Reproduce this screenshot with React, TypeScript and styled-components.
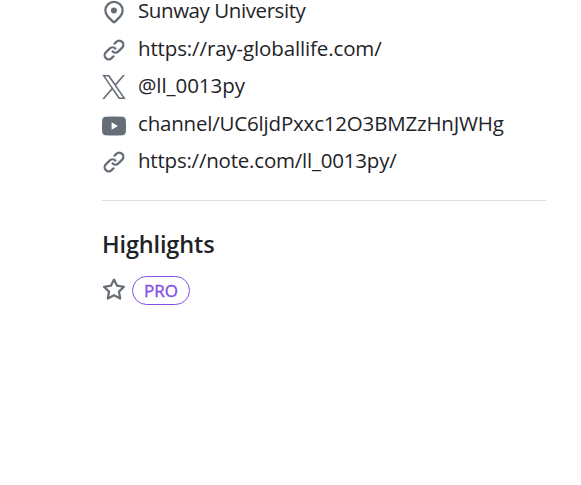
import React from "react";
import styled, { createGlobalStyle } from "styled-components";

const GlobalStyle = createGlobalStyle`
  body {
    margin: 0;
    background: #fff;
    color: #1f2328;
    font-family: "Segoe UI", "Open Sans", "Noto Sans", sans-serif;
    overflow: hidden;
  }
`;

const Sidebar = styled.aside`
  box-sizing: border-box;
  width: 546px;
  height: 485px;
  padding-left: 102px;
`;

const Details = styled.ul`
  list-style: none;
  margin: -8px 0 0;
  padding: 0;
`;

const Detail = styled.li<{ $tracking: number }>`
  display: flex;
  align-items: center;
  gap: 12px;
  height: 37.5px;
  font-size: 20.5px;
  line-height: 21.5px;
  letter-spacing: ${(p) => p.$tracking}px;
  white-space: nowrap;
`;

const Icon = styled.svg`
  flex: none;
  width: 24px;
  height: 24px;
  margin-top: 3px;
  fill: #656d76;
`;

const Highlights = styled.section`
  margin-top: 20px;
  border-top: 1px solid #d8dee4;
  padding-top: 25px;
`;

const Heading = styled.h2`
  margin: 0;
  font-size: 23.5px;
  font-weight: 600;
  line-height: 36px;
  letter-spacing: -0.15px;
`;

const Badges = styled.div`
  display: flex;
  align-items: center;
  gap: 6px;
  margin-top: 14px;
`;

const StarIcon = styled(Icon)`
  margin-top: -1px;
`;

const VideoIcon = styled(Icon)`
  margin-top: 5px;
`;

const Pro = styled.span`
  box-sizing: border-box;
  display: flex;
  align-items: center;
  justify-content: center;
  width: 58px;
  height: 29px;
  border: 1px solid #8250df;
  border-radius: 15px;
  color: #8250df;
  font-size: 17px;
  font-weight: 500;
  line-height: 27px;
  -webkit-text-stroke: 0.35px #8250df;
`;

const LocationIcon = () => (
  <Icon viewBox="0 0 16 16">
    <path d="m12.596 11.596-3.535 3.536a1.5 1.5 0 0 1-2.122 0l-3.535-3.536a6.5 6.5 0 1 1 9.192-9.193 6.5 6.5 0 0 1 0 9.193Zm-1.06-8.132v-.001a5 5 0 1 0-7.072 7.072L8 14.07l3.536-3.534a5 5 0 0 0 0-7.072ZM8 9a2 2 0 1 1-.001-3.999A2 2 0 0 1 8 9Z" />
  </Icon>
);

const LinkIcon = () => (
  <Icon viewBox="0 0 16 16">
    <path d="m7.775 3.275 1.25-1.25a3.5 3.5 0 1 1 4.95 4.95l-2.5 2.5a3.5 3.5 0 0 1-4.95 0 .751.751 0 0 1 .018-1.042.751.751 0 0 1 1.042-.018 1.998 1.998 0 0 0 2.83 0l2.5-2.5a2.002 2.002 0 0 0-2.83-2.83l-1.25 1.25a.751.751 0 0 1-1.042-.018.751.751 0 0 1-.018-1.042Zm-4.69 9.64a1.998 1.998 0 0 0 2.83 0l1.25-1.25a.751.751 0 0 1 1.042.018.751.751 0 0 1 .018 1.042l-1.25 1.25a3.5 3.5 0 1 1-4.95-4.95l2.5-2.5a3.5 3.5 0 0 1 4.95 0 .751.751 0 0 1-.018 1.042.751.751 0 0 1-1.042.018 1.998 1.998 0 0 0-2.83 0l-2.5 2.5a1.998 1.998 0 0 0 0 2.83Z" />
  </Icon>
);

const XIcon = () => (
  <Icon viewBox="0 0 1200 1227">
    <path d="M714.163 519.284L1160.89 0H1055.03L667.137 450.887L357.328 0H0L468.492 681.821L0 1226.37H105.866L515.491 750.218L842.672 1226.37H1200L714.137 519.284H714.163ZM569.165 687.828L521.697 619.934L144.011 79.6944H306.615L611.412 515.685L658.88 583.579L1055.08 1150.3H892.476L569.165 687.854V687.828Z" />
  </Icon>
);

const YouTubeIcon = () => (
  <VideoIcon viewBox="0 0 24 24">
    <path
      fillRule="evenodd"
      d="M3.5 2.8Q12 2.2 20.5 2.8Q23.5 3 23.8 6Q24.2 12 23.8 18Q23.5 21 20.5 21.2Q12 21.8 3.5 21.2Q.5 21 .2 18Q-.2 12 .2 6Q.5 3 3.5 2.8ZM9.6 8.3V15.7L15.9 12Z"
    />
  </VideoIcon>
);

const details = [
  { icon: LocationIcon, text: "Sunway University", tracking: -0.42 },
  { icon: LinkIcon, text: "https://ray-globallife.com/", tracking: -0.13 },
  { icon: XIcon, text: "@ll_0013py", tracking: -0.05 },
  { icon: YouTubeIcon, text: "channel/UC6ljdPxxc12O3BMZzHnJWHg", tracking: -0.19 },
  { icon: LinkIcon, text: "https://note.com/ll_0013py/", tracking: -0.21 },
];

export default function App() {
  return (
    <>
      <GlobalStyle />
      <Sidebar>
        <Details>
          {details.map(({ icon: Glyph, text, tracking }) => (
            <Detail key={text} $tracking={tracking}>
              <Glyph />
              <span>{text}</span>
            </Detail>
          ))}
        </Details>
        <Highlights>
          <Heading>Highlights</Heading>
          <Badges>
            <StarIcon viewBox="0 0 16 16">
              <path d="M8 .25a.75.75 0 0 1 .673.418l1.882 3.815 4.21.612a.75.75 0 0 1 .416 1.279l-3.046 2.97.719 4.192a.751.751 0 0 1-1.088.791L8 12.347l-3.766 1.98a.75.75 0 0 1-1.088-.79l.72-4.194L.818 6.374a.75.75 0 0 1 .416-1.28l4.21-.611L7.327.668A.75.75 0 0 1 8 .25Zm0 2.445L6.615 5.5a.75.75 0 0 1-.564.41l-3.097.45 2.24 2.184a.75.75 0 0 1 .216.664l-.528 3.084 2.769-1.456a.75.75 0 0 1 .698 0l2.77 1.456-.53-3.084a.75.75 0 0 1 .216-.664l2.24-2.183-3.096-.45a.75.75 0 0 1-.564-.41L8 2.694Z" />
            </StarIcon>
            <Pro>PRO</Pro>
          </Badges>
        </Highlights>
      </Sidebar>
    </>
  );
}
